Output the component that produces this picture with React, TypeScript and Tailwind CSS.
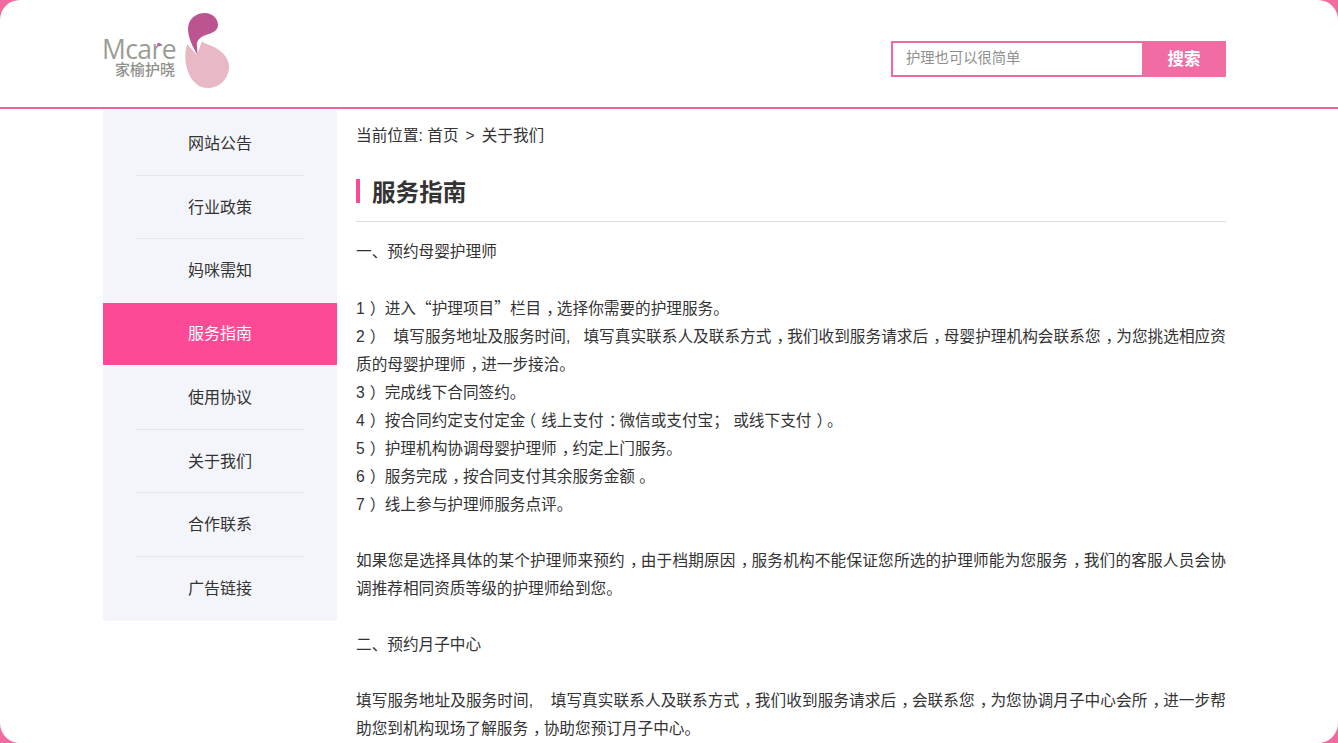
import React from "react";

const menu = ["网站公告", "行业政策", "妈咪需知", "服务指南", "使用协议", "关于我们", "合作联系", "广告链接"];
const font = { fontFamily: '"Liberation Sans", "Noto Sans CJK SC", sans-serif' };

function T({ s }: { s: string }) {
  const parts = s.split(/([，（）：“”])/);
  return (
    <>
      {parts.map((p, i) => {
        if (p === "，" || p === "：" || p === "）") return <span key={i} className="pl-[5px] tracking-[-5px]">{p}</span>;
        if (p === "（") return <span key={i} className="-ml-[5px] mr-[5px]">{p}</span>;
        if (p === "“" || p === "”") return <span key={i} className="font-['Noto_Sans_CJK_SC']">{p}</span>;
        return <React.Fragment key={i}>{p}</React.Fragment>;
      })}
    </>
  );
}

function Logo() {
  return (
    <div className="flex items-start h-[80px] mt-[10px]">
      <div className="w-[78px] pt-[26px] flex flex-col items-start shrink-0 relative">
        <div className="text-[26.5px] leading-[26px] tracking-[-0.6px] text-[#9c9c96] font-['Open_Sans'] font-medium">Mcare</div>
        <div className="absolute left-[55px] top-[33px] w-[4px] h-[3px] rounded-full bg-[#c8609a]" />
        <div className="text-[15px] leading-[15px] ml-[13px] text-[#8f8f8a] font-medium whitespace-nowrap">家榆护晓</div>
      </div>
      <svg width="52" height="80" viewBox="180 10 52 80" className="shrink-0">
        <path d="M187 44 C184 55 185 68 191 78 C196 85 201 88 208 88 C220 88 229 78 229 67 C229 56 220 50 212 46 C207 44 203 43 202 41 L197 55 Z" fill="#e8b9c5" />
        <path d="M197.5 55 C193 47 188 38 188 29 C188 19 196 13 205 13 C212 13 218 18 218 25 C218 31 212 33 206 35 C200 37 196 41 197 46 Z" fill="#bc5492" />
      </svg>
    </div>
  );
}

function P({ s }: { s?: string }) {
  return <p className="text-justify min-h-[28px]">{s ? <T s={s} /> : null}</p>;
}

export default function App() {
  return (
    <div className="h-[743px] w-[1338px] overflow-hidden bg-[#f06ca0]" style={font}>
      <div className="h-full bg-white rounded-[20px] overflow-hidden">
        <header className="h-[109px] border-b-2 border-[#f0609c] flex justify-between pl-[102px] pr-[112px]">
          <Logo />
          <div className="mt-[41px] flex h-[36px] w-[335px]">
            <div className="w-[251px] h-full border-2 border-r-0 border-[#ee6aa2] flex items-center pl-[13px] text-[14.3px] text-[#8f8f8f]">
              护理也可以很简单
            </div>
            <div className="flex-1 bg-[#f06ca3] text-white text-[16.5px] font-bold flex items-center justify-center">搜索</div>
          </div>
        </header>
        <div className="flex pl-[103px] pr-[112px] pt-px">
          <nav className="w-[234px] h-[511px] pt-[2px] bg-[#f4f5fa] shrink-0 flex flex-col">
            {menu.map((m, i) => {
              const active = i === 3;
              const noLine = i === 2 || i === 3 || i === 7;
              return (
                <div
                  key={m}
                  className={
                    active
                      ? "h-[62.5px] mb-px flex items-center justify-center text-[16px] bg-[#fd4a97] text-white"
                      : "h-[63.5px] pt-px flex items-center justify-center text-[16px] text-[#333333] relative"
                  }
                >
                  {m}
                  {!active && !noLine && <div className="absolute left-[33px] right-[33px] bottom-0 h-px bg-[#e4e5e8]" />}
                </div>
              );
            })}
          </nav>
          <main className="ml-[19px] flex-1 min-w-0 text-[15.65px] leading-[28px] text-[#333333] [text-spacing-trim:space-all]">
            <div className="mt-[12px] h-[28px] whitespace-pre">当前位置: 首页<span className="mx-[7px]">&gt;</span>关于我们</div>
            <div className="mt-[29px] h-[24px] border-l-4 border-[#fd4a97] pl-[12px] pt-[4px] flex items-center text-[23.6px] leading-[24px] font-bold text-[#333333]">服务指南</div>
            <div className="mt-[18px] border-t border-[#dcdcdc] pt-[16px]">
              <P s="一、预约母婴护理师" />
              <P />
              <P s="1） 进入“护理项目”栏目，选择你需要的护理服务。" />
              <P s={"2）\u00a0\u00a0\u00a0填写服务地址及服务时间,\u00a0\u00a0\u00a0填写真实联系人及联系方式，我们收到服务请求后，母婴护理机构会联系您，为您挑选相应资质的母婴护理师，进一步接洽。"} />
              <P s="3） 完成线下合同签约。" />
              <P s="4） 按合同约定支付定金（线上支付：微信或支付宝； 或线下支付）。" />
              <P s="5） 护理机构协调母婴护理师，约定上门服务。" />
              <P s="6） 服务完成，按合同支付其余服务金额 。" />
              <P s="7） 线上参与护理师服务点评。" />
              <P />
              <P s="如果您是选择具体的某个护理师来预约，由于档期原因，服务机构不能保证您所选的护理师能为您服务，我们的客服人员会协调推荐相同资质等级的护理师给到您。" />
              <P />
              <P s="二、预约月子中心" />
              <P />
              <P s={"填写服务地址及服务时间,\u00a0\u00a0\u00a0\u00a0填写真实联系人及联系方式，我们收到服务请求后，会联系您，为您协调月子中心会所，进一步帮助您到机构现场了解服务，协助您预订月子中心。"} />
            </div>
          </main>
        </div>
      </div>
    </div>
  );
}
